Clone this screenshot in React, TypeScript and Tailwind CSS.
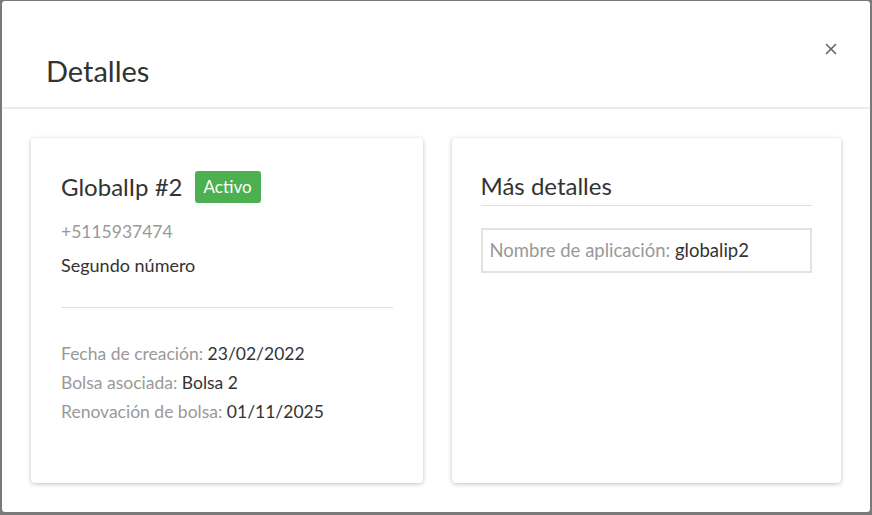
import React from 'react';
import { X } from 'lucide-react';

const font = { fontFamily: 'Lato, "Open Sans", sans-serif' };

const InfoRow: React.FC<{ label: string; value: string }> = ({ label, value }) => (
  <div className="leading-[29px]">
    <span className="text-[#999]">{label}: </span>
    <span className="text-[#333]">{value}</span>
  </div>
);

export default function App() {
  return (
    <div className="w-[872px] h-[515px] bg-[#7a7a7a] pt-px pl-[2px] pr-[2px] pb-[3px]" style={font}>
      <div className="h-full bg-white rounded-[3px] flex flex-col">
        <div className="relative h-[108px] border-b-2 border-[#ececec] shrink-0">
          <h4 className="absolute left-[44px] top-[50px] text-[29px] leading-[40px] text-[#333]">Detalles</h4>
          <button className="absolute right-[30px] top-[39px] text-[#666]">
            <X size={18} strokeWidth={2.2} />
          </button>
        </div>

        <div className="flex gap-[29px] px-[29px] pt-[29px] pb-[29px] flex-1">
          <div className="flex-1 bg-white rounded-[4px] shadow-[0_1px_4px_rgba(0,0,0,0.25)] px-[30px] pt-[33px] text-[17.5px]">
            <div className="flex items-center gap-[12px]">
              <span className="text-[24px] leading-[32px] text-[#333]">GlobalIp #2</span>
              <span className="bg-[#4caf50] text-white rounded-[3px] px-[9px] h-[32px] leading-[32px] text-[17px]">Activo</span>
            </div>
            <div className="text-[#999] mt-[14px] leading-[29px]">+5115937474</div>
            <div className="text-[#333] mt-[5px] leading-[29px] text-[18px]">Segundo número</div>
            <div className="border-t border-[#e0e0e0] mt-[27px] mb-[31px]" />
            <InfoRow label="Fecha de creación" value="23/02/2022" />
            <InfoRow label="Bolsa asociada" value="Bolsa 2" />
            <InfoRow label="Renovación de bolsa" value="01/11/2025" />
          </div>

          <div className="flex-1 bg-white rounded-[4px] shadow-[0_1px_4px_rgba(0,0,0,0.25)] px-[29px] pt-[32px] text-[18.5px]">
            <div className="text-[24px] leading-[32px] text-[#333] pb-[3px] border-b border-[#e0e0e0]">Más detalles</div>
            <div className="mt-[22px] border-2 border-[#e3e3e3] h-[45px] px-[7px] flex items-center">
              <span className="text-[#999]">Nombre de aplicación:&nbsp;</span>
              <span className="text-[#333]">globalip2</span>
            </div>
          </div>
        </div>
      </div>
    </div>
  );
}
